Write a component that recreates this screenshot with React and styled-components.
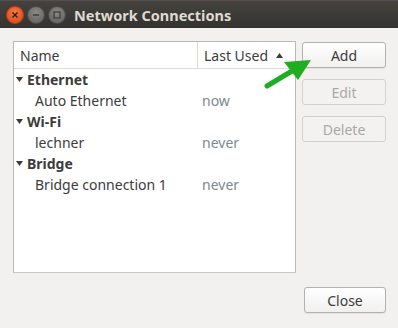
import React from 'react'
import styled, { createGlobalStyle } from 'styled-components'

const Global = createGlobalStyle`
    html, body {
        margin: 0;
        padding: 0;
        background: #f2f1f0;
    }
    body {
        font-family: 'Noto Sans', 'Open Sans', sans-serif;
        color: #3c3c3c;
    }
`

const Window = styled.div`
    width: 398px;
    height: 328px;
    display: flex;
    flex-direction: column;
    background: #f2f1f0;
    position: relative;
    overflow: hidden;
`

const TitleBar = styled.div`
    height: 28px;
    flex: none;
    display: flex;
    align-items: center;
    padding-left: 6px;
    gap: 3px;
    background: linear-gradient(#45433e, #3a3935 60%, #33322e);
    border-top: 1px solid #5a4a52;
    box-sizing: border-box;
`

const WinButton = styled.div`
    width: 16px;
    height: 16px;
    border-radius: 50%;
    display: flex;
    align-items: center;
    justify-content: center;
    background: ${props => props.close
        ? 'radial-gradient(circle at 50% 35%, #f47a4c, #e0521f 70%)'
        : 'radial-gradient(circle at 50% 35%, #8a8985, #6b6a66 70%)'};
    border: 1px solid ${props => props.close ? '#b8411a' : '#4d4c48'};
`

const Title = styled.div`
    margin-left: 5px;
    font-weight: bold;
    font-size: 14.5px;
    color: #dfdbd2;
`

const Body = styled.div`
    flex: 1;
    display: flex;
    flex-direction: column;
    padding: 13px 12px 15px 13px;
`

const Main = styled.div`
    display: flex;
    gap: 6px;
`

const ListBox = styled.div`
    width: 283px;
    height: 232px;
    box-sizing: border-box;
    background: #fff;
    border: 1px solid #b9b8b5;
    border-bottom-color: #c9c8c6;
`

const Header = styled.div`
    height: 27px;
    display: grid;
    grid-template-columns: 183px 1fr;
    border-bottom: 1px solid #dcdbda;
    box-sizing: border-box;
    font-size: 14px;
`

const HeadCell = styled.div`
    display: flex;
    align-items: center;
    gap: 8px;
    padding-left: 6px;
    border-left: ${props => props.last ? '1px solid #dcdbda' : 'none'};
`

const Row = styled.div`
    height: 21px;
    display: grid;
    grid-template-columns: 188px 1fr;
    align-items: center;
    font-size: 14px;
`

const GroupName = styled.div`
    display: flex;
    align-items: center;
    font-weight: bold;
    padding-left: 2px;
    gap: 4px;
`

const ItemName = styled.div`
    padding-left: 21px;
`

const When = styled.div`
    color: #7d8792;
`

const Side = styled.div`
    width: 84px;
    display: flex;
    flex-direction: column;
    gap: 11px;
    padding-top: 1px;
`

const Button = styled.button`
    width: ${props => props.w || '84px'};
    height: 26px;
    box-sizing: border-box;
    border-radius: 3px;
    font-family: inherit;
    font-size: 14px;
    padding: 0;
    color: ${props => props.disabled ? '#a9a9a8' : '#3c3c3c'};
    border: 1px solid ${props => props.disabled ? '#d2d1cf' : '#b3b2af'};
    background: ${props => props.disabled
        ? '#f3f2f1'
        : 'linear-gradient(#ffffff, #f1f0ef)'};
    box-shadow: ${props => props.disabled ? 'none' : '0 1px 0 rgba(0,0,0,0.06)'};
`

const Footer = styled.div`
    margin-top: auto;
    display: flex;
    justify-content: flex-end;
`

const Arrow = styled.svg`
    position: absolute;
    left: 262px;
    top: 56px;
`

const Tri = ({ up }) => (
    <svg width="7" height="5" viewBox="0 0 7 5">
        <path d={up ? 'M0 5 L3.5 0 L7 5 Z' : 'M0 0 L7 0 L3.5 5 Z'} fill="#3c3c3c" />
    </svg>
)

const groups = [
    { name: 'Ethernet', items: [{ n: 'Auto Ethernet', w: 'now' }] },
    { name: 'Wi-Fi', items: [{ n: 'lechner', w: 'never' }] },
    { name: 'Bridge', items: [{ n: 'Bridge connection 1', w: 'never' }] },
]

export default function App() {
    return (
        <Window>
            <Global />
            <TitleBar>
                <WinButton close="true">
                    <svg width="8" height="8" viewBox="0 0 8 8">
                        <path d="M1.5 1.5 L6.5 6.5 M6.5 1.5 L1.5 6.5" stroke="#3a1a0e" strokeWidth="1.4" />
                    </svg>
                </WinButton>
                <WinButton>
                    <svg width="8" height="8" viewBox="0 0 8 8">
                        <path d="M1 4 L7 4" stroke="#3b3a37" strokeWidth="1.4" />
                    </svg>
                </WinButton>
                <WinButton>
                    <svg width="8" height="8" viewBox="0 0 8 8">
                        <rect x="1" y="1" width="6" height="6" fill="none" stroke="#3b3a37" strokeWidth="1.2" />
                    </svg>
                </WinButton>
                <Title>Network Connections</Title>
            </TitleBar>
            <Body>
                <Main>
                    <ListBox>
                        <Header>
                            <HeadCell>Name</HeadCell>
                            <HeadCell last="true">Last Used <Tri up /></HeadCell>
                        </Header>
                        {groups.map(g => (
                            <React.Fragment key={g.name}>
                                <Row>
                                    <GroupName><Tri />{g.name}</GroupName>
                                </Row>
                                {g.items.map(i => (
                                    <Row key={i.n}>
                                        <ItemName>{i.n}</ItemName>
                                        <When>{i.w}</When>
                                    </Row>
                                ))}
                            </React.Fragment>
                        ))}
                    </ListBox>
                    <Side>
                        <Button>Add</Button>
                        <Button disabled>Edit</Button>
                        <Button disabled>Delete</Button>
                    </Side>
                </Main>
                <Footer>
                    <Button w="82px">Close</Button>
                </Footer>
            </Body>
            <Arrow width="52" height="36" viewBox="0 0 52 36">
                <path d="M5 30 L30 15" stroke="#1fae1f" strokeWidth="5" strokeLinecap="round" />
                <path d="M49 4 L22 6 L36 24 Z" fill="#1fae1f" />
            </Arrow>
        </Window>
    )
}
